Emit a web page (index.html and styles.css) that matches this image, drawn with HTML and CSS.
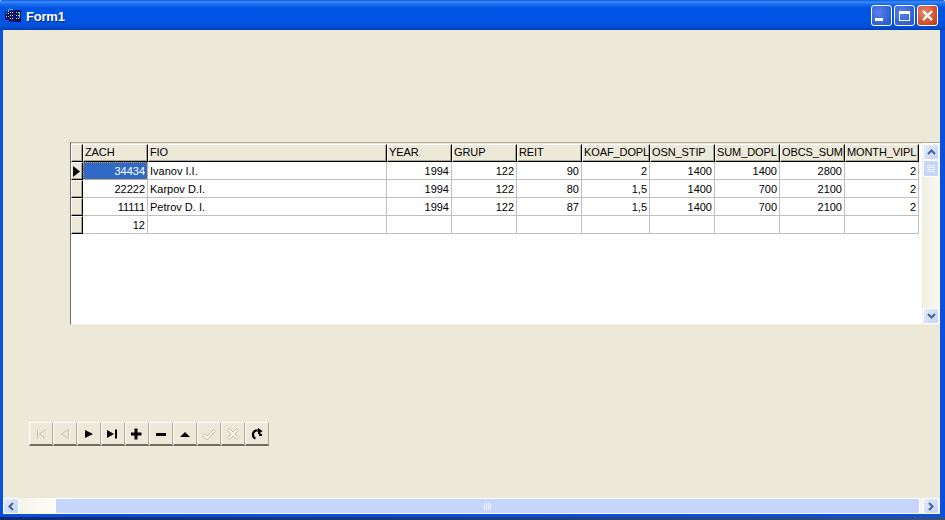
FILE: index.html
```html
<!DOCTYPE html>
<html lang="en">
<head>
<meta charset="utf-8">
<title>Form1</title>
<link rel="stylesheet" href="styles.css">
</head>
<body>
<div class="window">
  <header class="titlebar">
    <svg class="app-icon" width="16" height="14" viewBox="0 0 16 14">
      <rect x="0" y="3" width="5" height="8" fill="#101060"/>
      <rect x="4" y="1" width="6" height="12" fill="#181878"/>
      <rect x="10" y="1" width="6" height="12" fill="#101060"/>
      <path d="M1 4h1v1H1zM3 4h1v1H3zM1 7h1v1H1zM3 7h1v1H3z" fill="#d0c050"/>
      <path d="M5 3h1v1H5zM7 3h1v1H7zM5 6h1v1H5zM7 6h1v1H7zM5 9h1v1H5zM7 9h1v1H7zM11 3h1v1h-1zM13 3h1v1h-1zM11 6h1v1h-1zM13 6h1v1h-1zM11 9h1v1h-1zM13 9h1v1h-1z" fill="#e8d050"/>
      <path d="M4 0h4v1H4zM3 1h1v2H3zM14 3h1v6h-1z" fill="#40d0e0"/>
    </svg>
    <span class="title">Form1</span>
    <div class="caption-buttons">
      <div class="cap-btn"><span class="glyph-min"></span></div>
      <div class="cap-btn"><span class="glyph-max"></span></div>
      <div class="cap-btn close">
        <svg width="21" height="21" viewBox="0 0 21 21"><path d="M6 6l9 9M15 6l-9 9" stroke="#fff" stroke-width="2.4" fill="none"/></svg>
      </div>
    </div>
  </header>
  <main class="client">
    <div class="content">
      <section class="dbgrid">
        <div class="grid-area">
          <div class="row head">
            <div class="ind"></div>
            <div class="hc w65">ZACH</div><div class="hc w239">FIO</div><div class="hc w65">YEAR</div><div class="hc w65">GRUP</div><div class="hc w65">REIT</div><div class="hc w68">KOAF_DOPL</div><div class="hc w65">OSN_STIP</div><div class="hc w65">SUM_DOPL</div><div class="hc w65">OBCS_SUM</div><div class="hc w74">MONTH_VIPL</div>
          </div>
          <div class="row">
            <div class="ind"><svg width="7" height="11" viewBox="0 0 7 11"><path d="M0 0l7 5.500L0 11z" fill="#000"/></svg></div>
            <div class="c w65 num sel">34434</div><div class="c w239">Ivanov I.I.</div><div class="c w65 num">1994</div><div class="c w65 num">122</div><div class="c w65 num">90</div><div class="c w68 num">2</div><div class="c w65 num">1400</div><div class="c w65 num">1400</div><div class="c w65 num">2800</div><div class="c w74 num">2</div>
          </div>
          <div class="row">
            <div class="ind"></div>
            <div class="c w65 num">22222</div><div class="c w239">Karpov D.I.</div><div class="c w65 num">1994</div><div class="c w65 num">122</div><div class="c w65 num">80</div><div class="c w68 num">1,5</div><div class="c w65 num">1400</div><div class="c w65 num">700</div><div class="c w65 num">2100</div><div class="c w74 num">2</div>
          </div>
          <div class="row">
            <div class="ind"></div>
            <div class="c w65 num">11111</div><div class="c w239">Petrov D. I.</div><div class="c w65 num">1994</div><div class="c w65 num">122</div><div class="c w65 num">87</div><div class="c w68 num">1,5</div><div class="c w65 num">1400</div><div class="c w65 num">700</div><div class="c w65 num">2100</div><div class="c w74 num">2</div>
          </div>
          <div class="row">
            <div class="ind"></div>
            <div class="c w65 num">12</div><div class="c w239"></div><div class="c w65"></div><div class="c w65"></div><div class="c w65"></div><div class="c w68"></div><div class="c w65"></div><div class="c w65"></div><div class="c w65"></div><div class="c w74"></div>
          </div>
        </div>
        <div class="vscroll">
          <div class="sb-btn"><svg width="9" height="6" viewBox="0 0 9 6"><path d="M1 5l3.500-3.500L8 5" stroke="#4d6185" stroke-width="2" fill="none"/></svg></div>
          <div class="vthumb"><span></span><span></span><span></span><span></span></div>
          <div class="vtrack"></div>
          <div class="sb-btn"><svg width="9" height="6" viewBox="0 0 9 6"><path d="M1 1l3.500 3.500L8 1" stroke="#4d6185" stroke-width="2" fill="none"/></svg></div>
        </div>
      </section>
      <nav class="navigator">
        <div class="nb"><svg width="14" height="14" viewBox="0 0 14 14"><path d="M3.500 2.500v9M11.500 2.500v9L5.500 7z" stroke="#c4c2b4" fill="none"/><path d="M4.500 12h1M12 12V3" stroke="#fff" fill="none"/></svg></div>
        <div class="nb"><svg width="14" height="14" viewBox="0 0 14 14"><path d="M10.500 2.500v9L3.500 7z" stroke="#c4c2b4" fill="none"/><path d="M11.500 3v9" stroke="#fff" fill="none"/></svg></div>
        <div class="nb"><svg width="12" height="12" viewBox="0 0 12 12"><path d="M2 2l8 4-8 4z" fill="#000"/></svg></div>
        <div class="nb"><svg width="12" height="12" viewBox="0 0 12 12"><path d="M0 2l7 4-7 4z" fill="#000"/><path d="M8 1.500h2v9H8z" fill="#000"/></svg></div>
        <div class="nb"><svg width="12" height="12" viewBox="0 0 12 12"><path d="M3.500.5h3v4h4v3h-4v4h-3v-4h-4v-3h4z" fill="#000"/></svg></div>
        <div class="nb"><svg width="12" height="12" viewBox="0 0 12 12"><path d="M1 5h10v3H1z" fill="#000"/></svg></div>
        <div class="nb"><svg width="12" height="12" viewBox="0 0 12 12"><path d="M1 9l5-5 5 5z" fill="#000"/></svg></div>
        <div class="nb"><svg width="16" height="14" viewBox="0 0 16 14"><path d="M1.500 8.500l2-2 2.500 2.500L12.500 2.500l2 2L6 13z" stroke="#c4c2b4" fill="#f4f2e6"/></svg></div>
        <div class="nb"><svg width="14" height="14" viewBox="0 0 14 14"><path d="M3.500 1.500L7 5l3.500-3.500 2 2L9 7l3.500 3.500-2 2L7 9l-3.500 3.500-2-2L5 7 1.500 3.500z" stroke="#c4c2b4" fill="#f4f2e6"/></svg></div>
        <div class="nb"><svg width="12" height="12" viewBox="0 0 12 12"><path d="M4.500 10.500C1.500 9.500.5 4 5 2.500h3" stroke="#000" stroke-width="2.200" fill="none"/><path d="M7 0l4.500 3L7 6.500zM8 5l3 1v2H8z" fill="#000"/></svg></div>
      </nav>
    </div>
    <div class="hscroll">
      <div class="sb-btn"><svg width="6" height="9" viewBox="0 0 6 9"><path d="M5 1L1.500 4.500 5 8" stroke="#4d6185" stroke-width="2" fill="none"/></svg></div>
      <div class="htrack"></div>
      <div class="hthumb"><span></span><span></span><span></span><span></span></div>
      <div class="sb-btn"><svg width="6" height="9" viewBox="0 0 6 9"><path d="M1 1l3.500 3.500L1 8" stroke="#4d6185" stroke-width="2" fill="none"/></svg></div>
    </div>
  </main>
</div>
<div class="desktop"></div>
</body>
</html>
```

FILE: styles.css
```css
html, body {
  margin: 0;
  padding: 0;
  width: 945px;
  height: 520px;
  overflow: hidden;
  background: #d8e4f8;
  font-family: "Liberation Sans", sans-serif;
}
.window {
  width: 945px;
  height: 517px;
  display: flex;
  flex-direction: column;
  box-sizing: border-box;
  background: #0a50dc;
  border-radius: 3px 3px 0 0;
}
.titlebar {
  height: 30px;
  flex: none;
  display: flex;
  align-items: center;
  box-sizing: border-box;
  padding: 2px 2px 0 5px;
  border-radius: 3px 3px 0 0;
  background: linear-gradient(to bottom, #0a5ae0 0, #3d8cf6 2px, #1a6cf0 4px, #0054e2 8px, #0055e5 20px, #0350d8 26px, #0040b8 30px);
}
.app-icon { flex: none; }
.title {
  margin-left: 5px;
  color: #fff;
  font: bold 13px "Liberation Sans", sans-serif;
  letter-spacing: -.2px;
  text-shadow: 1px 1px 0 #0a2a80;
}
.caption-buttons {
  margin-left: auto;
  display: flex;
  gap: 2px;
  margin-right: 5px;
  margin-top: -1px;
}
.cap-btn {
  width: 21px;
  height: 21px;
  box-sizing: border-box;
  border: 1px solid #fff;
  border-radius: 3px;
  background: radial-gradient(circle at 35% 35%, #5a82e8, #2f5fd8 70%, #2850c0);
  display: flex;
  align-items: center;
  justify-content: center;
}
.cap-btn.close {
  background: radial-gradient(circle at 35% 35%, #e88a70, #d24e28 65%, #b83c14);
}
.cap-btn.close svg { margin: -1px; }
.glyph-min {
  width: 8px;
  height: 3px;
  background: #fff;
  margin: 8px 5px 0 0;
}
.glyph-max {
  width: 11px;
  height: 10px;
  box-sizing: border-box;
  border: 1px solid #fff;
  border-top-width: 3px;
}
.client {
  flex: 1;
  min-height: 0;
  margin: 0 5px 3px 3px;
  background: #ece9d8;
  display: flex;
  flex-direction: column;
}
.content {
  flex: 1;
  min-height: 0;
  padding: 112px 0 0 67px;
}
.dbgrid {
  height: 183px;
  box-sizing: border-box;
  border-left: 1px solid #716f64;
  border-top: 1px solid #aca899;
  border-bottom: 1px solid #f1efe2;
  background: #fff;
  display: flex;
}
.grid-area {
  flex: 1;
  padding: 1px 0 0;
  background: linear-gradient(#ece9d8 1px, #fff 1px);
  font: 11px/15px "Liberation Sans", sans-serif;
  color: #000;
}
.row { display: flex; height: 18px; }
.ind {
  width: 12px;
  flex: none;
  box-sizing: border-box;
  height: 18px;
  background: #ece9d8;
  border-top: 1px solid #fff;
  border-left: 1px solid #fff;
  border-right: 1px solid #000;
  border-bottom: 1px solid #000;
  box-shadow: inset -1px -1px 0 #aca899;
  display: flex;
  align-items: center;
  padding-left: 1px;
}
.hc, .c {
  flex: none;
  box-sizing: border-box;
  height: 18px;
  padding: 0 2px;
  white-space: nowrap;
  overflow: hidden;
}
.hc {
  background: #ece9d8;
  border-top: 1px solid #fff;
  border-left: 1px solid #fff;
  border-right: 1px solid #000;
  border-bottom: 1px solid #000;
  box-shadow: inset -1px -1px 0 #aca899;
  padding: 0 0 0 1px;
  letter-spacing: -.1px;
}
.c {
  line-height: 17px;
  padding-top: 1px;
  border-right: 1px solid #c0c0c0;
  border-bottom: 1px solid #c0c0c0;
}
.num { text-align: right; padding-right: 2px; }
.sel {
  background: #316ac5;
  color: #fff;
  outline: 1px dotted #c8a050;
  outline-offset: -1px;
}
.w65 { width: 65px; }
.w68 { width: 68px; }
.w74 { width: 74px; }
.w239 { width: 239px; }
.vscroll {
  width: 18px;
  flex: none;
  margin-top: 1px;
  display: flex;
  flex-direction: column;
  background: linear-gradient(90deg, #f1efe2, #f8f7f0);
}
.sb-btn {
  width: 16px;
  height: 16px;
  flex: none;
  box-sizing: border-box;
  border: 1px solid #fff;
  border-radius: 2px;
  background: linear-gradient(135deg, #e1eafe, #c3d3fb);
  display: flex;
  align-items: center;
  justify-content: center;
  margin: 0 1px;
}
.vthumb {
  height: 17px;
  flex: none;
  margin: 0 1px;
  box-sizing: border-box;
  border: 1px solid #fff;
  border-radius: 2px;
  background: #c5d5fb;
  display: flex;
  flex-direction: column;
  align-items: center;
  justify-content: center;
  gap: 1px;
}
.vthumb span { width: 8px; height: 1px; background: #eef3fe; }
.vtrack { flex: 1; }
.navigator {
  margin: 97px 0 0 -41px;
  display: flex;
  width: 240px;
  height: 24px;
}
.nb {
  width: 24px;
  height: 24px;
  box-sizing: border-box;
  background: #ece9d8;
  border-top: 1px solid #fff;
  border-left: 1px solid #fff;
  border-right: 1px solid #aca899;
  border-bottom: 2px solid #716f64;
  display: flex;
  align-items: center;
  justify-content: center;
}
.hscroll {
  flex: none;
  height: 16px;
  display: flex;
  align-items: stretch;
  background: #f5f4ea;
}
.hscroll .sb-btn { margin: 0 1px 0 1px; }
.hscroll .sb-btn:first-child { margin: 0; }
.htrack { width: 36px; flex: none; background: linear-gradient(90deg, #f5f4ea, #fdfdf8); }
.hthumb {
  flex: 1;
  box-sizing: border-box;
  margin-right: 2px;
  border: 1px solid #fff;
  border-radius: 2px;
  background: #c5d5fb;
  display: flex;
  align-items: center;
  justify-content: center;
  gap: 1px;
}
.hthumb span { width: 1px; height: 7px; background: #eef3fe; }
.desktop {
  height: 3px;
  background: linear-gradient(90deg, #0f2a70, #1d3c80 50%, #33507f);
}
```
